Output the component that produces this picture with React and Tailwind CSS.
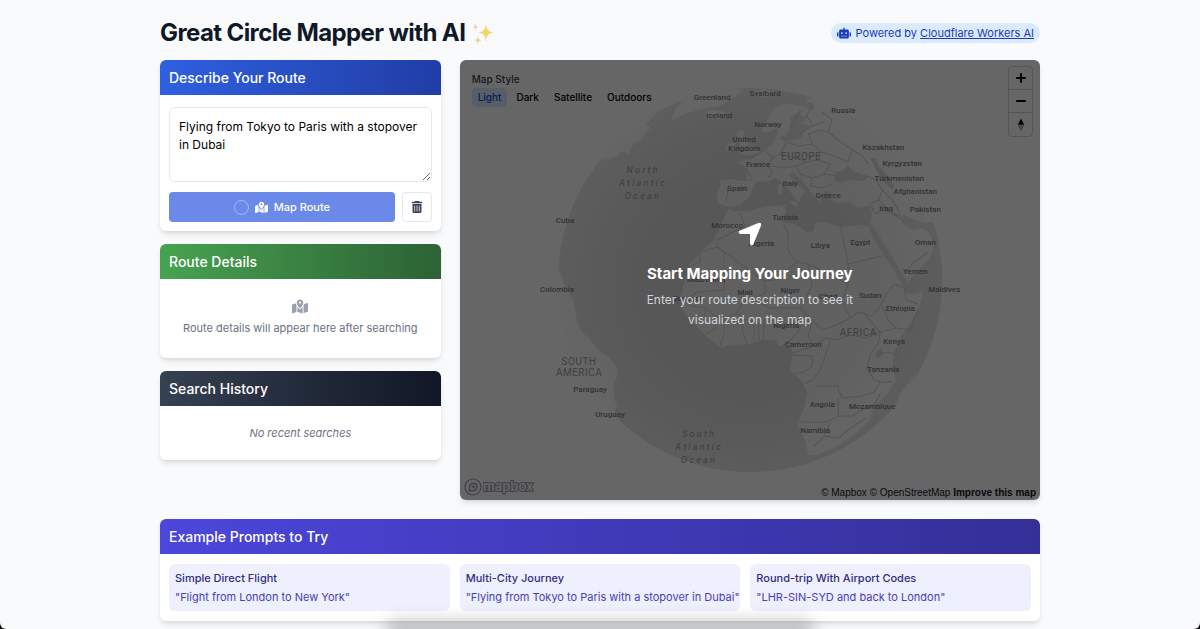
import { useState } from 'react';
import { FaRobot, FaMapLocationDot, FaTrashCan, FaLocationArrow } from 'react-icons/fa6';

const MAP_STYLES = ['Light', 'Dark', 'Satellite', 'Outdoors'];

const EXAMPLES = [
  { title: 'Simple Direct Flight', prompt: 'Flight from London to New York' },
  { title: 'Multi-City Journey', prompt: 'Flying from Tokyo to Paris with a stopover in Dubai' },
  { title: 'Round-trip With Airport Codes', prompt: 'LHR-SIN-SYD and back to London' }
];

// [name, x, y] in map coordinates, anchored at the middle of the label
const COUNTRIES = [
  ['Svalbard', 765, 96], ['Russia', 843, 113], ['Norway', 768, 127], ['United', 744, 142],
  ['Kingdom', 744, 151], ['France', 758, 167], ['Spain', 737, 191], ['Italy', 790, 186],
  ['Greece', 828, 198], ['Kazakhstan', 883, 150], ['Kyrgyzstan', 902, 166],
  ['Turkmenistan', 899, 181], ['Afghanistan', 915, 194], ['Iraq', 886, 211],
  ['Pakistan', 925, 212], ['Morocco', 727, 228], ['Tunisia', 785, 220], ['Algeria', 761, 246],
  ['Libya', 820, 248], ['Egypt', 860, 245], ['Oman', 925, 245], ['Yemen', 915, 274],
  ['Maldives', 944, 292], ['Mauritania', 706, 282], ['Senegal', 687, 301], ['Mali', 745, 295],
  ['Niger', 790, 293], ['Chad', 828, 299], ['Sudan', 870, 298], ['Ethiopia', 900, 311],
  ['Nigeria', 786, 328], ['Cameroon', 803, 347], ['Kenya', 894, 344], ['Tanzania', 883, 372],
  ['Angola', 822, 407], ['Mozambique', 872, 409], ['Namibia', 815, 433], ['Cuba', 565, 223],
  ['Colombia', 557, 292], ['Paraguay', 590, 392], ['Uruguay', 610, 417],
  ['Greenland', 712, 100], ['Iceland', 719, 118]
];

const BORDERS = [
  // north africa
  'M740 213 L745 226 L733 232 L717 240 L717 247 L700 252 L700 262 L690 266',
  'M717 247 L764 281 L774 280 L797 262 L792 257 L788 250 L788 233 L783 224',
  'M717 247 L724 252 L724 290 L697 292 L690 297',
  'M797 262 L808 264 L848 284 L848 264 L840 224 M848 264 L882 256',
  'M764 281 L766 292 L752 300 L742 303 L736 314 L724 318 L714 316 L706 308 L690 306',
  'M808 264 L812 284 L804 303 L800 308 L770 308 L762 304 L752 300',
  'M848 284 L842 300 L846 310 L850 318 L836 325 L822 330 L814 322 L804 310',
  'M706 308 L704 320 L695 324 M714 316 L716 328 L706 334 M724 318 L724 334 L720 346',
  'M736 314 L744 318 L742 330 L747 344 M742 318 L754 322 L754 342 M758 322 L759 341 M764 320 L763 341',
  'M800 308 L805 314 L798 332 L786 344 L782 346',
  // central africa
  'M805 314 L812 322 L808 336 L814 346 L802 350 L790 354',
  'M814 346 L824 338 L836 340 L850 335 L866 338 L880 332 L874 326 L868 318 L862 312',
  'M850 318 L858 312 L872 316 L880 306 L886 294 L894 284 L904 288 M882 306 L888 320 L896 328 L910 330 L918 308 M904 288 L906 300 L918 304',
  'M830 341 L826 352 L820 370 L812 380 L804 384',
  'M792 355 L812 356 L812 366 L804 372 L794 374',
  'M880 332 L878 344 L870 354 L867 368 L874 380 L880 382 L874 392 L862 396 L842 398 L838 390 L838 386 L816 386',
  'M878 354 L890 352 L898 358 M880 332 L896 328 M880 382 L892 382',
  // southern africa
  'M838 398 L838 416 L826 422 L798 422 M838 416 L852 416 L862 410 L874 404 L880 394',
  'M830 422 L824 436 L814 446 M824 436 L838 438 L850 428 L866 418',
  // europe
  'M746 168 L752 180 M752 180 L735 180 M728 188 L726 202',
  'M765 150 L772 158 L768 166 L772 172 L768 178 M772 158 L780 154 L786 142 L782 136',
  'M786 142 L798 146 L812 144 L820 152 L818 160 L806 162 L796 158 L780 154',
  'M772 166 L784 168 L796 166 L806 162 M796 166 L800 174 L812 178 L824 174 L830 164 L818 160',
  'M812 178 L810 186 L822 188 L832 184 M824 174 L836 176 M820 152 L834 156 L848 162 L852 150 L840 142 L828 132',
  'M812 144 L808 134 L820 130 L828 132 L832 120 L822 112 M800 134 L812 126 L824 122',
  'M812 106 L806 116 L812 124 M790 128 L796 118 L800 110',
  'M852 150 L862 156 L868 164 M866 176 L876 180 L882 190 L878 200 L870 204',
  // middle east
  'M878 200 L884 206 L892 214 L900 218 M870 206 L876 214 L882 210 L900 216 M882 190 L892 200 L900 214',
  'M905 272 L914 262 L928 252'
];

function Sparkles() {
  return (
    <svg viewBox="0 0 24 24" className="w-6 h-6" aria-hidden="true">
      <path d="M15 2.5c.7 5.600 2.200 8 7.500 9-5.300 1-6.800 3.400-7.500 9-.7-5.600-2.200-8-7.500-9 5.300-1 6.800-3.400 7.500-9z" fill="#f3d674" />
      <path d="M4.500 2c.4 2.600 1 3.600 3.200 4-2.200.4-2.800 1.400-3.200 4-.4-2.600-1-3.600-3.200-4 2.200-.4 2.800-1.400 3.200-4z" fill="#efdca2" />
      <path d="M7 15c.4 2.800 1.100 3.800 3.500 4.200-2.400.4-3.100 1.400-3.500 4.200-.4-2.800-1.100-3.800-3.500-4.200 2.400-.4 3.100-1.400 3.500-4.200z" fill="#f0d685" />
    </svg>
  );
}

function Globe() {
  return (
    <svg
      viewBox="460 60 580 440"
      preserveAspectRatio="xMidYMid slice"
      className="absolute inset-0 w-full h-full"
      aria-hidden="true"
    >
      <defs>
        <radialGradient id="ocean" cx="50%" cy="52%" r="50%">
          <stop offset="0" stopColor="#d8d8d8" />
          <stop offset="0.6" stopColor="#dadada" />
          <stop offset="1" stopColor="#e8e8e8" />
        </radialGradient>
        <radialGradient id="land" gradientUnits="userSpaceOnUse" cx="750" cy="280" r="192">
          <stop offset="0" stopColor="#f0f0f0" />
          <stop offset="0.7" stopColor="#f3f3f3" />
          <stop offset="1" stopColor="#fdfdfd" />
        </radialGradient>
        <clipPath id="sphere">
          <circle cx="750" cy="280" r="192" />
        </clipPath>
      </defs>

      <circle cx="750" cy="280" r="192" fill="url(#ocean)" />

      <g clipPath="url(#sphere)">
        <g fill="url(#land)">
          {/* Americas */}
          <path d="M555 250 L560 272 L566 288 L573 300 L576 316 L579 328 L588 338 L598 350 L608 357 L616 366 L618 374 L613 386 L614 398 L617 406 L614 414 L622 424 L600 460 L540 400 Z" />
          <path d="M570 185 L588 165 L606 159 L616 157 L622 151 L628 154 L632 146 L642 138 L650 128 L646 124 L656 114 L668 104 L640 100 Z" />
          <path d="M670 122 L682 115 L700 109 L718 106 L732 99 L742 91 L720 84 L690 92 L676 108 Z" />
          <path d="M704 113 L711 110 L722 111 L728 115 L719 119 L708 118 Z" />
          <path d="M752 92 L764 89 L776 92 L768 97 L756 96 Z" />
          {/* British Isles */}
          <path d="M738 130 L744 131 L743 137 L749 142 L753 149 L760 152 L752 155 L740 154 L745 149 L739 145 L741 139 L736 136 Z" />
          <path d="M727 143 L735 143 L734 151 L725 151 Z" />
          {/* Scandinavia */}
          <path d="M762 128 L768 118 L774 109 L784 104 L796 105 L806 108 L798 112 L790 118 L790 128 L785 136 L780 137 L776 128 L768 133 L762 132 Z" />
          {/* Eurasia */}
          <path d="M800 114 L806 108 L812 112 L814 104 L804 100 L824 96 L960 90 L960 214 L942 214 L934 222 L925 223 L915 220 L904 215 L899 218 L905 226 L913 230 L922 228 L930 234 L934 246 L928 260 L918 270 L908 282 L903 276 L894 260 L884 244 L875 230 L870 224 L872 214 L869 205 L858 208 L848 202 L838 203 L830 199 L829 191 L824 192 L820 202 L813 196 L808 188 L800 178 L792 172 L789 175 L796 184 L806 192 L802 194 L799 202 L794 198 L789 190 L781 182 L775 178 L766 182 L756 181 L752 190 L748 198 L740 205 L730 207 L724 206 L718 203 L716 196 L720 188 L720 180 L734 179 L746 180 L747 172 L744 166 L736 162 L744 160 L752 159 L760 154 L766 149 L773 144 L776 136 L780 132 L780 140 L790 141 L802 138 L804 130 L812 126 L802 124 L806 118 Z" />
          <path d="M778 184 L782 184 L782 194 L778 195 Z M788 201 L798 202 L796 207 Z M778 176 L781 176 L780 182 Z" />
          {/* Africa */}
          <path d="M728 209 L734 211 L746 211 L760 208 L774 206 L785 205 L786 212 L782 222 L794 224 L808 233 L814 230 L815 223 L824 222 L840 227 L858 225 L868 226 L872 236 L884 256 L894 270 L899 280 L907 293 L914 294 L923 291 L919 308 L908 326 L899 340 L894 352 L892 368 L896 380 L887 394 L874 406 L868 422 L852 436 L834 448 L816 455 L808 455 L805 440 L797 425 L804 408 L807 392 L802 382 L790 370 L792 355 L791 347 L779 346 L775 340 L762 340 L750 344 L735 345 L720 347 L708 338 L694 324 L682 310 L681 296 L685 280 L689 265 L704 249 L714 240 L722 222 Z" />
          <path d="M894 408 L900 394 L909 382 L915 372 L913 384 L904 400 L897 411 Z" />
        </g>

        {/* inland seas and lakes */}
        <g fill="#dcdcdc">
          <path d="M834 181 L835 172 L843 171 L847 165 L854 172 L868 176 L864 181 L850 180 L840 183 Z" />
          <path d="M870 158 L876 158 L878 166 L886 174 L894 186 L892 190 L882 180 L876 170 Z" />
          <path d="M876 352 L881 348 L883 353 L879 358 L875 358 Z" />
        </g>

        <g fill="none" stroke="#d0d0d0" strokeWidth="1" strokeLinejoin="round">
          {BORDERS.map((d) => (
            <path key={d} d={d} />
          ))}
        </g>
      </g>

      <g fill="#808080" textAnchor="middle" className="font-['Roboto',sans-serif] text-[8px] font-medium">
        {COUNTRIES.map(([name, x, y]) => (
          <text key={name} x={x} y={y}>{name}</text>
        ))}
      </g>

      <g fill="#a0a0a0" textAnchor="middle" className="font-['Roboto',sans-serif] text-[10px] tracking-wider">
        <text x="801" y="160">EUROPE</text>
        <text x="858" y="336">AFRICA</text>
        <text x="579" y="365">SOUTH</text>
        <text x="579" y="376">AMERICA</text>
      </g>

      <g fill="#9a9a9a" textAnchor="middle" className="font-['Roboto',sans-serif] text-[9px] italic tracking-[0.25em]">
        <text x="643" y="173">North</text>
        <text x="643" y="186">Atlantic</text>
        <text x="643" y="199">Ocean</text>
        <text x="699" y="437">South</text>
        <text x="699" y="450">Atlantic</text>
        <text x="699" y="463">Ocean</text>
      </g>
    </svg>
  );
}

function MapControls() {
  return (
    <div className="absolute top-[6px] right-[7px] w-[25px] rounded border border-gray-300 divide-y divide-gray-300 text-black">
      <button type="button" aria-label="Zoom in" className="w-full h-[23px] flex items-center justify-center">
        <svg viewBox="0 0 10 10" className="w-[10px] h-[10px]">
          <path d="M5 1v8M1 5h8" stroke="currentColor" strokeWidth="2" strokeLinecap="round" />
        </svg>
      </button>
      <button type="button" aria-label="Zoom out" className="w-full h-[23px] flex items-center justify-center">
        <svg viewBox="0 0 10 10" className="w-[10px] h-[10px]">
          <path d="M1 5h8" stroke="currentColor" strokeWidth="2" strokeLinecap="round" />
        </svg>
      </button>
      <button type="button" aria-label="Reset bearing" className="w-full h-[23px] flex items-center justify-center">
        <svg viewBox="0 0 10 14" className="w-[10px] h-[14px]">
          <path d="M5 .5L8.200 6.700H1.800z" fill="currentColor" />
          <path d="M5 13.500L8.200 7.300H1.800z" fill="#aaa" />
        </svg>
      </button>
    </div>
  );
}

function MapboxLogo() {
  return (
    <div className="absolute left-1 bottom-1 flex items-center gap-px text-gray-400">
      <svg viewBox="0 0 18 18" className="w-[18px] h-[18px]" fill="none" stroke="currentColor">
        <circle cx="9" cy="9" r="8" strokeWidth="1.200" />
        <path d="M5.500 12.500c-.8-4.500.8-7 4-7 2 0 3.500 1.500 3.500 3.300 0 3-3 4.500-7.500 3.700z" strokeWidth="1.400" />
        <path d="M9.500 7l.6 1.300 1.300.5-1.300.6-.6 1.300-.6-1.300-1.300-.6 1.300-.5z" fill="currentColor" strokeWidth="0.300" />
      </svg>
      <svg viewBox="0 0 51 16" className="w-[51px] h-4">
        <text x="0" y="12" fill="#fff" stroke="currentColor" strokeWidth="2" paintOrder="stroke" className="font-['Inter',sans-serif] text-[13px] font-semibold">mapbox</text>
      </svg>
    </div>
  );
}

function Card({ title, gradient, children }) {
  return (
    <section className="bg-white rounded-md shadow-md overflow-hidden">
      <h2 className={`h-[35px] px-[9px] flex items-center text-sm font-medium text-white bg-linear-to-r ${gradient}`}>
        {title}
      </h2>
      {children}
    </section>
  );
}

export default function App() {
  const [route, setRoute] = useState('Flying from Tokyo to Paris with a stopover in Dubai');
  const [mapStyle, setMapStyle] = useState('Light');

  return (
    <div className="bg-black font-['Inter',sans-serif]">
      <div className="relative h-screen overflow-hidden rounded-b-md bg-gray-50">
        <div className="max-w-[880px] mx-auto pt-4">
          <header className="h-[34px] mb-[10px] flex items-center justify-between">
            <h1 className="text-2xl font-bold text-gray-900 tracking-tight flex items-center gap-[6px]">
              Great Circle Mapper with AI
              <Sparkles />
            </h1>
            <p className="h-5 px-[6px] rounded-full bg-blue-100 text-blue-800 text-[11px] flex items-center gap-[5px]">
              <FaRobot className="w-[14px] h-[14px]" />
              <span>
                Powered by <a href="#workers-ai" className="underline">Cloudflare Workers AI</a>
              </span>
            </p>
          </header>

          <main className="grid grid-cols-3 gap-[19px]">
            <div className="flex flex-col gap-[13px]">
              <Card title={<label htmlFor="route">Describe Your Route</label>} gradient="from-[#2f60e0] to-[#213da6]">
                <div className="px-[9px] pt-3 pb-[9px]">
                  <textarea
                    id="route"
                    value={route}
                    onChange={(e) => setRoute(e.target.value)}
                    className="block w-full h-[75px] px-[9px] py-[10px] text-xs/[18px] text-black border border-gray-200 rounded-md"
                  />
                  <div className="mt-[10px] flex gap-[7px]">
                    <button
                      type="button"
                      disabled
                      className="flex-1 h-[30px] rounded bg-[#6b89e8] text-white text-[11px] font-medium flex items-center justify-center gap-[6px]"
                    >
                      <span className="w-[15px] h-[15px] rounded-full border border-white/40"></span>
                      <FaMapLocationDot className="w-[13px] h-[13px]" />
                      Map Route
                    </button>
                    <button
                      type="button"
                      aria-label="Clear"
                      onClick={() => setRoute('')}
                      className="w-[30px] h-[30px] rounded border border-gray-200 text-gray-700 flex items-center justify-center"
                    >
                      <FaTrashCan className="w-3 h-3" />
                    </button>
                  </div>
                </div>
              </Card>

              <Card title="Route Details" gradient="from-[#47a350] to-[#2d6235]">
                <div className="h-[79px] pt-5 flex flex-col items-center gap-[6px]">
                  <FaMapLocationDot className="w-4 h-[15px] text-gray-400" />
                  <p className="text-[11px]/4 text-gray-500">Route details will appear here after searching</p>
                </div>
              </Card>

              <Card title="Search History" gradient="from-[#364152] to-[#111726]">
                <p className="h-[54px] flex items-center justify-center text-[11px] italic text-gray-500">No recent searches</p>
              </Card>
            </div>

            <div className="col-span-2 relative h-[440px] rounded-md shadow-md overflow-hidden bg-white">
              <Globe />

              <div className="absolute top-[10px] left-2 p-1">
                <p className="text-[10px]/[10px] font-medium text-gray-700">Map Style</p>
                <div className="mt-1 flex text-[10px] font-medium">
                  {MAP_STYLES.map((style) => (
                    <button
                      key={style}
                      type="button"
                      onClick={() => setMapStyle(style)}
                      className={`h-[19px] px-[6px] mr-[3px] rounded ${
                        mapStyle === style ? 'bg-blue-100 text-blue-700' : 'text-black'
                      }`}
                    >
                      {style}
                    </button>
                  ))}
                </div>
              </div>

              <MapControls />
              <MapboxLogo />

              <p className="absolute right-1 bottom-0 text-[10px] text-gray-900 font-['Liberation_Sans',sans-serif]">
                <a href="#mapbox">© Mapbox</a> <a href="#osm">© OpenStreetMap</a>{' '}
                <a href="#improve" className="font-bold">Improve this map</a>
              </p>

              {/* Empty state */}
              <div className="absolute inset-0 pb-[10px] bg-black/60 flex flex-col items-center justify-center text-center text-white">
                <FaLocationArrow className="w-7 h-7" />
                <h3 className="mt-[14px] text-[15px]/6 font-bold">Start Mapping Your Journey</h3>
                <p className="mt-1 w-[230px] text-xs/5 text-gray-300">
                  Enter your route description to see it visualized on the map
                </p>
              </div>
            </div>
          </main>

          <div className="mt-[19px]">
            <Card title="Example Prompts to Try" gradient="from-[#4c46dc] to-[#352f98]">
              <div className="px-[9px] py-[10px] grid grid-cols-3 gap-[10px]">
                {EXAMPLES.map(({ title, prompt }) => (
                  <button
                    key={title}
                    type="button"
                    onClick={() => setRoute(prompt)}
                    className="px-[6px] pt-[5px] pb-1 rounded-md bg-[#eef0fe] text-left text-[11px] whitespace-nowrap"
                  >
                    <h3 className="leading-[19px] font-medium text-[#312e81]">{title}</h3>
                    <p className="leading-[19px] text-[#4740b8]">"{prompt}"</p>
                  </button>
                ))}
              </div>
            </Card>
          </div>
        </div>

        {/* soft shadow along the bottom edge of the window */}
        <div className="absolute -bottom-3 left-1/2 -translate-x-1/2 w-[430px] h-5 rounded-full bg-black/25 blur-[8px]"></div>
      </div>
    </div>
  );
}
